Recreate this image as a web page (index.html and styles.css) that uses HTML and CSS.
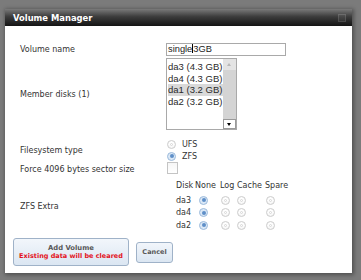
FILE: index.html
```html
<!DOCTYPE html>
<html>
<head>
<meta charset="utf-8">
<link rel="stylesheet" href="styles.css">
</head>
<body>
<div class="dialog">
  <div class="titlebar">
    <span class="title">Volume Manager</span>
    <span class="close"></span>
  </div>
  <div class="content">
    <div class="form">
      <div class="row row-name">
        <div class="label">Volume name</div>
        <div class="field"><div class="textbox">single<span class="caret"></span>3GB</div></div>
      </div>
      <div class="row row-disks">
        <div class="label">Member disks (1)</div>
        <div class="field">
          <div class="listbox">
            <ul class="options">
              <li>da3 (4.3 GB)</li>
              <li>da4 (4.3 GB)</li>
              <li class="selected">da1 (3.2 GB)</li>
              <li>da2 (3.2 GB)</li>
            </ul>
            <div class="scrollbar">
              <span class="sb-up"></span>
              <span class="sb-track"></span>
              <span class="sb-down"></span>
            </div>
          </div>
        </div>
      </div>
      <div class="row row-fs">
        <div class="label">Filesystem type</div>
        <div class="field radios">
          <label class="opt"><input type="radio" name="fs" class="radio"><span>UFS</span></label>
          <label class="opt"><input type="radio" name="fs" class="radio" checked><span>ZFS</span></label>
        </div>
      </div>
      <div class="row row-force">
        <div class="label">Force 4096 bytes sector size</div>
        <div class="field"><input type="checkbox" class="check"></div>
      </div>
      <div class="row row-extra">
        <div class="label">ZFS Extra</div>
        <div class="field">
          <div class="extra">
            <div class="ehead">Disk</div><div class="ehead">None</div><div class="ehead">Log</div><div class="ehead">Cache</div><div class="ehead">Spare</div>
            <div class="ecell">da3</div>
            <div class="ecell"><input type="radio" name="x3" class="radio sm none" checked></div>
            <div class="ecell"><input type="radio" name="x3" class="radio sm"></div>
            <div class="ecell"><input type="radio" name="x3" class="radio sm cache"></div>
            <div class="ecell"><input type="radio" name="x3" class="radio sm"></div>
            <div class="ecell">da4</div>
            <div class="ecell"><input type="radio" name="x4" class="radio sm none" checked></div>
            <div class="ecell"><input type="radio" name="x4" class="radio sm"></div>
            <div class="ecell"><input type="radio" name="x4" class="radio sm cache"></div>
            <div class="ecell"><input type="radio" name="x4" class="radio sm"></div>
            <div class="ecell">da2</div>
            <div class="ecell"><input type="radio" name="x2" class="radio sm none" checked></div>
            <div class="ecell"><input type="radio" name="x2" class="radio sm"></div>
            <div class="ecell"><input type="radio" name="x2" class="radio sm cache"></div>
            <div class="ecell"><input type="radio" name="x2" class="radio sm"></div>
          </div>
        </div>
      </div>
    </div>
    <div class="actions">
      <button class="btn btn-add"><span class="btn-main">Add Volume</span><span class="btn-warn">Existing data will be cleared</span></button>
      <button class="btn btn-cancel">Cancel</button>
    </div>
  </div>
</div>
</body>
</html>
```
FILE: styles.css
```css
html, body {
  margin: 0;
  padding: 0;
  background: #7b7b7b;
  width: 361px;
  height: 280px;
  overflow: hidden;
}
body {
  padding: 9px 0 0 5px;
  box-sizing: border-box;
}
.dialog {
  width: 347px;
  height: 264px;
  background: #fff;
  box-shadow: 1px 1px 4px 1px rgba(0,0,0,0.35);
  display: flex;
  flex-direction: column;
}
.titlebar {
  height: 17px;
  flex: none;
  background: linear-gradient(#7a7a7a, #3c3c3c 45%, #141414);
  display: flex;
  align-items: center;
  justify-content: space-between;
  padding: 0 8px;
}
.title {
  font: bold 8.4px "DejaVu Sans", sans-serif;
  color: #fff;
}
.close {
  width: 6px;
  height: 6px;
  border: 1px solid rgba(255,255,255,0.12);
  background: rgba(255,255,255,0.06);
  margin-right: -2px;
}
.content {
  flex: 1;
  display: flex;
  flex-direction: column;
}
.form {
  padding: 17px 0 0 15px;
}
.row {
  display: flex;
  align-items: center;
}
.label {
  width: 146px;
  flex: none;
  font: 8px "DejaVu Sans", sans-serif;
  color: #333;
}
.row-name { height: 13px; }
.row-disks { height: 72px; margin-top: 2px; }
.row-fs { height: 23px; margin-top: 9px; }
.row-force { height: 12px; margin-top: 1px; }
.row-extra { height: 54px; margin-top: 4px; align-items: flex-start; }
.row-extra .label { margin-top: 23px; }

.textbox {
  width: 120px;
  height: 13px;
  box-sizing: border-box;
  border: 1px solid #a9a9a9;
  font: 9.3px/11px "Liberation Sans", Arial, sans-serif;
  color: #222;
  padding-left: 1px;
  white-space: nowrap;
}
.caret {
  display: inline-block;
  width: 1px;
  height: 9px;
  background: #000;
  vertical-align: -1px;
}

.listbox {
  width: 71px;
  height: 72px;
  box-sizing: border-box;
  border: 1px solid #a9a9a9;
  display: flex;
}
.options {
  list-style: none;
  margin: 0;
  padding: 2px 0 0 1px;
  flex: 1;
  font: 9.5px/11.7px "Liberation Sans", Arial, sans-serif;
  color: #2a2a2a;
}
.options li {
  padding-left: 0;
  white-space: nowrap;
}
.options li.selected {
  background: #d9d9d9;
}
.scrollbar {
  width: 13px;
  flex: none;
  display: flex;
  flex-direction: column;
  background: #dcdcdc;
}
.sb-up {
  height: 11px;
  background: #e4e4e4;
  position: relative;
}
.sb-up::after {
  content: "";
  position: absolute;
  left: 4px;
  top: 4px;
  border-left: 2.5px solid transparent;
  border-right: 2.5px solid transparent;
  border-bottom: 3px solid #b8b8b8;
}
.sb-track {
  flex: 1;
  background: #d4d4d4;
}
.sb-down {
  height: 10px;
  box-sizing: border-box;
  background: #fff;
  border: 1px solid #9a9a9a;
  position: relative;
}
.sb-down::after {
  content: "";
  position: absolute;
  left: 3px;
  top: 3px;
  border-left: 2.5px solid transparent;
  border-right: 2.5px solid transparent;
  border-top: 3px solid #000;
}

.radios {
  display: flex;
  flex-direction: column;
}
.opt {
  display: flex;
  align-items: center;
  height: 11.5px;
  font: 8px "DejaVu Sans", sans-serif;
  color: #333;
}
.opt span { margin-left: 6px; }

.radio {
  -webkit-appearance: none;
  appearance: none;
  width: 9px;
  height: 9px;
  margin: 0 0 0 1px;
  border-radius: 50%;
  border: 1px solid #cdcdcd;
  background: radial-gradient(circle at 50% 40%, #fff 30%, #eeeeee 100%);
  box-sizing: border-box;
  position: relative;
  flex: none;
}
.radio::after {
  content: "";
  position: absolute;
  left: 2px;
  top: 2px;
  width: 3px;
  height: 3px;
  border-radius: 50%;
  border: 0.5px solid #d6d6d6;
  box-sizing: border-box;
}
.radio:checked {
  border-color: #9dbbdc;
  background: #dbe8f6;
}
.radio:checked::after {
  left: 1.5px;
  top: 1.5px;
  width: 4px;
  height: 4px;
  border: none;
  background: #5f8fc8;
}

.check {
  -webkit-appearance: none;
  appearance: none;
  width: 11px;
  height: 12px;
  margin: 0 0 0 1px;
  border: 1px solid #c4c4c4;
  background: linear-gradient(#f6f6f6, #fff);
  box-sizing: border-box;
}

.extra {
  display: grid;
  grid-template-columns: 19px 25px 17px 28px 24px;
  grid-template-rows: 12px 12.5px 12.5px 12.5px;
  row-gap: 0;
  margin-left: 10px;
  font: 8px "DejaVu Sans", sans-serif;
  color: #333;
}
.ehead {
  display: flex;
  align-items: center;
  white-space: nowrap;
}
.extra .ecell:nth-child(-n+10) { }
.ecell {
  display: flex;
  align-items: center;
  white-space: nowrap;
}
.extra > .ecell:nth-child(n+6):nth-child(-n+10) { margin-top: 3px; }
.extra { grid-template-rows: 12px 15.5px 12.5px 12.5px; }
.radio.sm { margin-left: 1px; }
.radio.sm.none { margin-left: 4px; }
.radio.sm.cache { margin-left: 0; }

.actions {
  display: flex;
  align-items: center;
  gap: 7px;
  margin-top: 5px;
  padding-left: 8px;
}
.btn {
  border: 1px solid #9fb2c8;
  border-radius: 3px;
  background: linear-gradient(#f2f6fb, #dbe6f2);
  font-family: "DejaVu Sans", sans-serif;
  font-weight: bold;
  color: #585858;
  padding: 0;
  box-sizing: border-box;
  display: flex;
  flex-direction: column;
  align-items: center;
  justify-content: center;
}
.btn-add {
  width: 116px;
  height: 28px;
}
.btn-main {
  font-size: 6.8px;
  line-height: 8.5px;
}
.btn-warn {
  font-size: 6.5px;
  line-height: 8.5px;
  color: #e3121c;
}
.btn-cancel {
  width: 37px;
  height: 21px;
  font-size: 6.5px;
}
```
